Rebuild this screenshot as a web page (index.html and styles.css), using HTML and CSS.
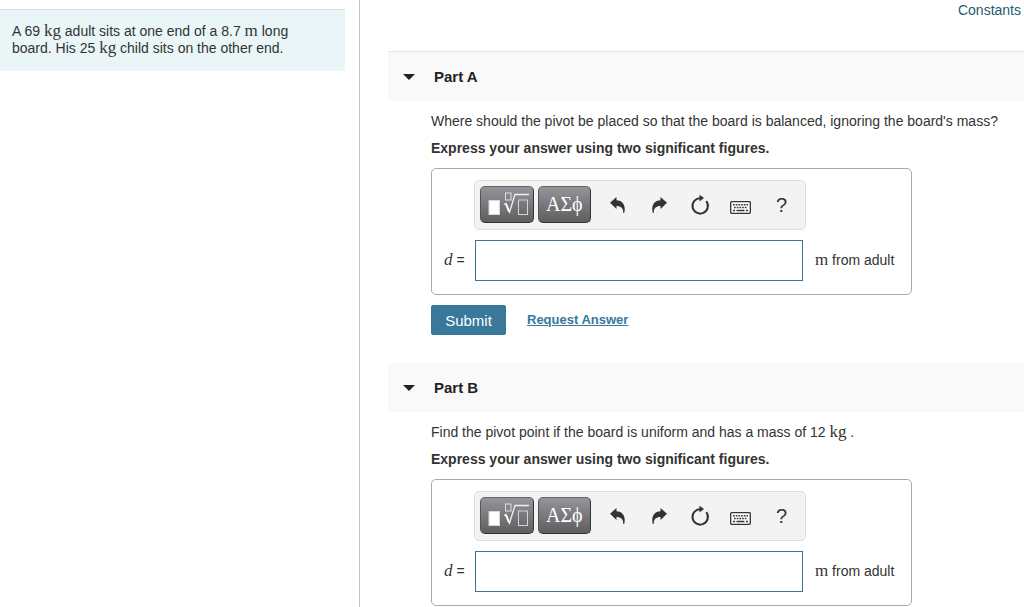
FILE: index.html
```html
<!DOCTYPE html>
<html lang="en">
<head>
<meta charset="utf-8">
<title>Pivot problem</title>
<link rel="stylesheet" href="styles.css">
</head>
<body>
<svg class="sprite" aria-hidden="true">
  <symbol id="template" viewBox="0 0 46 26">
    <rect x="5" y="9.500" width="10.500" height="14" fill="#fff" stroke="#d8d8d8"/>
    <path d="M20 13.500l2-1L25.500 21l5.500-17.500h14" fill="none" stroke="#f0f0f0" stroke-width="1.300"/>
    <path d="M22 13l3 7.500" fill="none" stroke="#fff" stroke-width="2"/>
    <rect x="21.500" y="2" width="5.500" height="7" fill="none" stroke="#e0e0e0"/>
    <rect x="34.500" y="9" width="9" height="14.500" fill="none" stroke="#d4d4d4"/>
  </symbol>
  <symbol id="undo" viewBox="0 0 16 16">
    <path d="M0 5.800L6.500 0v3.200C12 3.400 16.300 7.500 14.200 16h-1C13.600 11.500 11 9 6.500 9v3z" fill="#333"/>
  </symbol>
  <symbol id="redo" viewBox="0 0 16 16">
    <path d="M16 5.800L9.500 0v3.200C4 3.400-.3 7.500 1.800 16h1C2.400 11.500 5 9 9.500 9v3z" fill="#333"/>
  </symbol>
  <symbol id="reset" viewBox="0 0 20 22">
    <path d="M10.500 4.200A7.700 7.700 0 1 0 16.300 7.200" fill="none" stroke="#333" stroke-width="2"/>
    <path d="M9.500 .8l4.500 3.200-4.500 3.500z" fill="#333"/>
  </symbol>
  <symbol id="keys" viewBox="0 0 21 13">
    <rect x=".7" y=".7" width="19.600" height="11.600" rx=".8" fill="#fff" stroke="#333" stroke-width="1.300"/>
    <path d="M3 3.800h15M4 6.500h13.500" stroke="#333" stroke-width="1.600" stroke-dasharray="1.700 1"/>
    <path d="M3 9.500h2M6.500 9.500h8M16 9.500h2" stroke="#333" stroke-width="1.400"/>
  </symbol>
</svg>
<div class="page">
  <aside class="side">
    <p class="problem">A 69 <span class="unit">kg</span> adult sits at one end of a 8.7 <span class="unit">m</span> long board. His 25 <span class="unit">kg</span> child sits on the other end.</p>
  </aside>
  <main class="main">
    <div class="links"><a class="constants" href="#">Constants</a></div>
    <section class="part">
      <h2 class="part-head part-head-first"><button class="toggle" type="button"><svg class="caret" viewBox="0 0 12 6"><path d="M0 0h12L6 6z"/></svg>Part A</button></h2>
      <div class="part-body">
        <p class="question">Where should the pivot be placed so that the board is balanced, ignoring the board's mass?</p>
        <p class="instruction">Express your answer using two significant figures.</p>
        <div class="answer">
          <div class="toolbar">
            <button class="key" type="button" aria-label="Templates"><svg class="i-template"><use href="#template"/></svg></button>
            <button class="key" type="button">ΑΣϕ</button>
            <div class="tools">
              <button class="tool" type="button" aria-label="Undo"><svg class="i-arrow"><use href="#undo"/></svg></button>
              <button class="tool" type="button" aria-label="Redo"><svg class="i-arrow"><use href="#redo"/></svg></button>
              <button class="tool" type="button" aria-label="Reset"><svg class="i-reset"><use href="#reset"/></svg></button>
              <button class="tool" type="button" aria-label="Keyboard shortcuts"><svg class="i-keys"><use href="#keys"/></svg></button>
              <button class="tool help" type="button">?</button>
            </div>
          </div>
          <div class="entry">
            <label class="variable" for="answer-a"><i class="math">d</i> =</label>
            <input class="field" id="answer-a" type="text">
            <span class="suffix"><span class="unit">m</span> from adult</span>
          </div>
        </div>
        <div class="actions">
          <button class="submit" type="button">Submit</button>
          <a class="request" href="#">Request Answer</a>
        </div>
      </div>
    </section>
    <section class="part">
      <h2 class="part-head"><button class="toggle" type="button"><svg class="caret" viewBox="0 0 12 6"><path d="M0 0h12L6 6z"/></svg>Part B</button></h2>
      <div class="part-body">
        <p class="question">Find the pivot point if the board is uniform and has a mass of 12 <span class="unit">kg</span> .</p>
        <p class="instruction">Express your answer using two significant figures.</p>
        <div class="answer">
          <div class="toolbar">
            <button class="key" type="button" aria-label="Templates"><svg class="i-template"><use href="#template"/></svg></button>
            <button class="key" type="button">ΑΣϕ</button>
            <div class="tools">
              <button class="tool" type="button" aria-label="Undo"><svg class="i-arrow"><use href="#undo"/></svg></button>
              <button class="tool" type="button" aria-label="Redo"><svg class="i-arrow"><use href="#redo"/></svg></button>
              <button class="tool" type="button" aria-label="Reset"><svg class="i-reset"><use href="#reset"/></svg></button>
              <button class="tool" type="button" aria-label="Keyboard shortcuts"><svg class="i-keys"><use href="#keys"/></svg></button>
              <button class="tool help" type="button">?</button>
            </div>
          </div>
          <div class="entry">
            <label class="variable" for="answer-b"><i class="math">d</i> =</label>
            <input class="field" id="answer-b" type="text">
            <span class="suffix"><span class="unit">m</span> from adult</span>
          </div>
        </div>
      </div>
    </section>
  </main>
</div>
</body>
</html>
```
FILE: styles.css
```css
* { box-sizing: border-box; }
body {
  margin: 0;
  background: #fff;
  color: #333;
  font: 14px/18px "Liberation Sans", Arial, sans-serif;
}
p, h2 { margin: 0; }
button { margin: 0; font: inherit; color: inherit; }
.sprite { display: none; }
.page { display: flex; min-height: 100vh; }
.side {
  flex: 0 0 360px;
  padding: 9px 14px 0 0;
  border-right: 1px solid #bcc5d3;
}
.problem {
  padding: 13px 40px 14px 12px;
  background: #e9f5f7;
  border-top: 1px solid #dcdfdf;
  line-height: 17px;
}
.unit, .math {
  font-family: "Liberation Serif", "Times New Roman", serif;
  font-size: 17px;
  line-height: 16px;
}
.main { flex: 1; min-width: 0; padding-left: 28px; }
.links { padding: 1px 3px 32px 0; text-align: right; }
.constants { color: #1f5a72; text-decoration: none; }
.part-head { background: #f9f9f9; font-size: 15px; color: #222; }
.part-head-first { border-top: 1px solid #e6e6e6; }
.toggle {
  display: flex;
  align-items: center;
  gap: 19px;
  width: 100%;
  height: 49px;
  padding: 0 15px;
  border: 0;
  background: none;
  font-weight: bold;
}
.caret { width: 12px; height: 6px; fill: #222; }
.part-body { padding: 11px 24px 0 43px; }
.question { padding-bottom: 9px; }
.instruction { padding-bottom: 11px; font-weight: bold; }
.answer {
  max-width: 481px;
  padding: 11px 12px 13px;
  border: 1px solid #aaa;
  border-radius: 5px;
}
.toolbar {
  display: flex;
  gap: 4px;
  width: 332px;
  height: 50px;
  margin: 0 0 10px 30px;
  padding: 5px;
  border: 1px solid #ddd;
  border-radius: 5px;
  background: #f3f3f3;
}
.key {
  display: flex;
  align-items: center;
  justify-content: center;
  width: 54px;
  height: 37px;
  padding: 0 0 2px;
  border: 1px solid #333;
  border-top-color: #666;
  border-left-color: #555;
  border-radius: 5px;
  background: linear-gradient(#94949a, #5e5e60);
  color: #fff;
  font: 20px/20px "Liberation Serif", "DejaVu Serif", serif;
}
.tools { display: flex; gap: 4px; padding-left: 4px; }
.tool {
  display: flex;
  align-items: center;
  justify-content: center;
  width: 37px;
  height: 38px;
  padding: 0;
  border: 0;
  background: none;
}
.help { font-size: 20px; }
.i-template { width: 46px; height: 26px; }
.i-arrow { width: 16px; height: 16px; }
.i-reset { width: 20px; height: 22px; }
.i-keys { width: 21px; height: 13px; margin-top: 4px; }
.entry { display: flex; align-items: center; }
.variable { width: 31px; padding-bottom: 2px; white-space: nowrap; }
.field {
  width: 328px;
  height: 41px;
  padding: 0 8px;
  border: 1px solid #38789a;
  background: #fff;
  font: inherit;
}
.suffix { padding: 0 0 2px 12px; white-space: nowrap; }
.actions {
  display: flex;
  align-items: center;
  gap: 21px;
  padding: 10px 0 28px;
}
.submit {
  width: 75px;
  height: 30px;
  padding: 2px 0 0;
  border: 0;
  border-radius: 2px;
  background: #38789a;
  color: #fff;
  font-size: 15px;
}
.request { color: #38789a; font-size: 13px; font-weight: bold; }
```
